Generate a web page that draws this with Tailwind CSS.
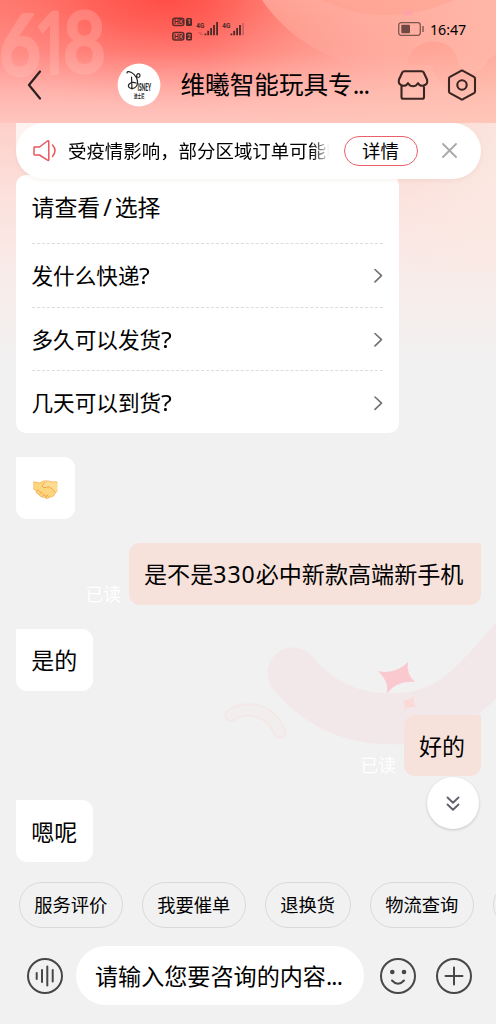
<!DOCTYPE html>
<html lang="zh-CN">
<head>
<meta charset="utf-8">
<title>客服聊天</title>
<script src="https://cdn.jsdelivr.net/npm/@tailwindcss/browser@4"></script>
</head>
<body class="bg-[#f1f1f1]">
<div class="relative isolate flex h-[1024px] w-[496px] flex-col overflow-hidden whitespace-nowrap bg-[#f1f1f1] font-['Noto_Sans','Noto_Sans_CJK_SC',sans-serif] text-black">

  <!-- Festive backdrop -->
  <svg class="absolute inset-0 -z-10" width="496" height="1024" viewBox="0 0 496 1024">
    <defs>
      <radialGradient id="glow" gradientUnits="userSpaceOnUse" cx="165" cy="-5" r="240" gradientTransform="translate(165 0) scale(1 .46) translate(-165 0)">
        <stop offset="0" stop-color="#ff4d45"/><stop offset=".3" stop-color="#ff5850" stop-opacity=".75"/><stop offset="1" stop-color="#ff8f84" stop-opacity="0"/>
      </radialGradient>
      <linearGradient id="head" x1="0" y1="0" x2="0" y2="1"><stop offset="0" stop-color="#ff7a70"/><stop offset=".45" stop-color="#ff908a"/><stop offset=".75" stop-color="#ffaca6"/><stop offset="1" stop-color="#ffbfb8"/></linearGradient>
      <linearGradient id="right" x1="0" y1="0" x2="1" y2="0"><stop offset=".42" stop-color="#ffc0ac" stop-opacity="0"/><stop offset="1" stop-color="#ffc0ac" stop-opacity=".75"/></linearGradient>
      <linearGradient id="body" x1="0" y1="0" x2="0" y2="1"><stop offset="0" stop-color="#fdd0ca"/><stop offset=".3" stop-color="#fce1dc"/><stop offset=".62" stop-color="#f8ecea"/><stop offset="1" stop-color="#f1f1f1"/></linearGradient>
      <linearGradient id="fade" x1="0" y1="0" x2="0" y2="1"><stop offset="0" stop-color="#ffbcae" stop-opacity=".6"/><stop offset="1" stop-color="#ffc4b6" stop-opacity="0"/></linearGradient>
      <linearGradient id="swirl" x1="0" y1="0" x2="0" y2="1"><stop offset="0" stop-color="#ff8f80" stop-opacity=".35"/><stop offset="1" stop-color="#ffa498" stop-opacity=".05"/></linearGradient>
      <linearGradient id="wash" x1="0" y1="0" x2="0" y2="1"><stop offset="0" stop-color="#ffd0c8" stop-opacity="0"/><stop offset="1" stop-color="#ffd0c8" stop-opacity=".35"/></linearGradient>
      <linearGradient id="side" x1="0" y1="0" x2="1" y2="0"><stop offset=".75" stop-color="#fbeae4" stop-opacity="0"/><stop offset="1" stop-color="#fbeae4" stop-opacity=".75"/></linearGradient>
    </defs>
    <rect y="123" width="496" height="247" fill="url(#body)"/>
    <rect y="123" width="496" height="150" fill="url(#side)"/>
    <rect width="496" height="123" fill="url(#head)"/>
    <rect width="496" height="123" fill="url(#glow)"/>
    <rect width="496" height="123" fill="url(#right)"/>
    <path d="M262 0C288 38 330 65 390 72H496V0Z" fill="url(#fade)"/>
    <path d="M322 0C360 20 410 20 455 0Z" fill="#ff9c88" opacity=".35"/>
    <path d="M407 65C410 35 454 32 459 65C464 78 480 76 488 60L496 54V101C460 112 442 92 431 65Z" fill="url(#swirl)"/>
    <rect y="50" width="496" height="73" fill="url(#wash)"/>
    <path d="M403 10l5 1 5-2-2 4 2 3-5-1-5 2 2-4Z" fill="#ff9fae" opacity=".8"/>
    <g fill="#ffc9c2" stroke="#ffc9c2" stroke-width="2" stroke-linejoin="round" opacity=".27" font-family="Lato, sans-serif" font-weight="700" font-size="87">
      <text x="-1" y="76" textLength="42" lengthAdjust="spacingAndGlyphs">6</text>
      <text x="34" y="74" font-family="Open Sans, sans-serif" font-size="86" font-weight="600" textLength="36" lengthAdjust="spacingAndGlyphs">1</text>
      <text x="63" y="73" textLength="43" lengthAdjust="spacingAndGlyphs">8</text>
    </g>
    <path d="M293 673C330 718 375 721 408 718C455 712 478 682 520 634" fill="none" stroke="#f3e8e9" stroke-width="51" stroke-linecap="round"/>
    <path d="M231 715C250 703 272 713 280 732" fill="none" stroke="#f4e6e5" stroke-width="13" stroke-linecap="round"/>
    <path d="M231 715C250 703 272 713 280 732" fill="none" stroke="#f2eeed" stroke-width="10.5" stroke-linecap="round"/>
    <path d="M378 671Q395 675 408 662Q406 674 415 682Q398 680 387 693Q389 681 378 671Z" fill="#fac9d0"/>
    <path d="M403 701Q409 700 414 697Q413 703 416 707Q409 706 404 710Q406 705 403 701Z" fill="#fad9d6"/>
  </svg>

  <header class="h-[123px] shrink-0">
    <!-- Status bar -->
    <div class="flex h-[50px] items-start justify-between pl-[172px] pr-[30px] pt-[17px]">
      <svg width="74" height="26" viewBox="0 0 74 26" fill="#4e2826">
        <g fill="none" stroke="#5c2a27" stroke-width="1.5"><rect x=".8" y="1.2" width="11" height="7.4" rx="2"/><rect x=".8" y="15.6" width="11" height="7.4" rx="2"/></g>
        <g font-family="Roboto, sans-serif" font-weight="700"><g font-size="6.8"><text x="1.9" y="7.4">HD</text><text x="1.9" y="21.8">HD</text></g>
        <rect x="14" y="1" width="6" height="8" rx="1.5"/><rect x="14" y="15.4" width="6" height="8" rx="1.5"/>
        <g font-size="6.5" fill="#e8665f"><text x="15.2" y="7.3">1</text><text x="15.2" y="21.7">2</text></g>
        <g font-size="7.6"><text x="24.3" y="10.6" textLength="8" lengthAdjust="spacingAndGlyphs">4G</text><text x="50.3" y="10.6" textLength="8" lengthAdjust="spacingAndGlyphs">4G</text></g></g>
        <path d="M32.5 16.5h1.8v1.8h-1.8zM35.3 13.8h1.8v4.5h-1.8zM38.2 11h1.8v7.3h-1.8zM41.1 8h1.8v10.3h-1.8zM44.2 5h1.8v13.3h-1.8zM58.5 16.5h1.8v1.8h-1.8zM61.3 13.8h1.8v4.5h-1.8zM64.2 11h1.8v7.3h-1.8zM67.1 8h1.8v10.3h-1.8z"/>
        <path d="M70.3 6h1.6v12.3h-1.6z" opacity=".3"/><path d="M26 15.8h4M28 17.5h3" stroke="#d4534c" stroke-width="1"/>
      </svg>
      <div class="flex items-start gap-[6px]">
        <svg class="mt-[5px]" width="26" height="15" viewBox="0 0 26 15"><rect x=".7" y=".7" width="21.6" height="12.6" rx="2.5" fill="none" stroke="#805650" stroke-width="1.3"/><rect x="3.3" y="2.8" width="8.7" height="8.4" rx="1" fill="#704844"/><path d="M25 4v6" stroke="#805650" stroke-width="1.4"/></svg>
        <span class="w-[36px] pt-[2px] text-[14.3px] leading-[22px] tracking-[-0.1px]">16:47</span>
      </div>
    </div>
    <!-- Conversation title -->
    <div class="flex h-[69px] items-center">
      <svg class="ml-[26px] shrink-0" width="16" height="30" viewBox="0 0 16 30" fill="none" stroke="#2b2220" stroke-width="2.2" stroke-linecap="round" stroke-linejoin="round"><path d="M14 1.5L3 15L14 28.5"/></svg>
      <svg class="ml-[75px] shrink-0" width="44" height="44" viewBox="0 0 44 44">
        <circle cx="22" cy="22" r="21.4" fill="#fff"/>
        <path d="M10 10C10 7 17 9 20 16C22 22 18 27 13 25C9 23 13 18 19 20M14.5 14L15 26M20.5 11C23 9.5 24 14 21.5 14.5C19.5 14.5 19 12 20.5 11" fill="none" stroke="#222" stroke-width="1.2" stroke-linecap="round"/>
        <text x="20.5" y="27.5" font-family="Lato, sans-serif" font-weight="900" font-size="10.5" textLength="13.5" lengthAdjust="spacingAndGlyphs" fill="#222">ISNEY</text>
        <text x="17" y="35" font-family="Noto Sans CJK SC" font-weight="700" font-size="5.4" textLength="10.5" lengthAdjust="spacingAndGlyphs" fill="#222">迪士尼</text>
      </svg>
      <h1 class="ml-[19.5px] w-[190.5px] pt-px text-[24.6px] leading-[36px] font-normal">维曦智能玩具专<span class="tracking-[-1.2px]">...</span></h1>
      <svg class="ml-[26px] shrink-0" width="32" height="32" viewBox="0 0 32 32" fill="none" stroke="#3a2522" stroke-width="2.1" stroke-linejoin="round" stroke-linecap="round"><path d="M7.2 2.2H24.8Q26 2.2 26.6 3.2L30 10.5Q31.4 15.7 26 16.7Q22.5 17 21 14.2Q19 17.3 16 17.3Q13 17.3 11 14.2Q9.5 17 6 16.7Q.6 15.7 2 10.5L5.4 3.2Q6 2.2 7.2 2.2ZM4.5 16.4V28Q4.5 29.8 6.3 29.8H25.2Q27 29.8 27 28V16.4"/></svg>
      <svg class="ml-[17px] shrink-0" width="32" height="32" viewBox="0 0 32 32" fill="none" stroke="#3a2522" stroke-width="2.1" stroke-linejoin="round"><path d="M15 1.8Q16 1.3 17 1.8L28 7.9Q29 8.5 29 9.6V22.4Q29 23.5 28 24.1L17 30.2Q16 30.7 15 30.2L4 24.1Q3 23.5 3 22.4V9.6Q3 8.5 4 7.9Z"/><circle cx="16" cy="16" r="4.7"/></svg>
    </div>
  </header>

  <main class="flex min-h-0 flex-1 flex-col px-[15.5px]">
    <!-- Notice; the tail of the previous bubble shows behind its left corner -->
    <div class="z-10 h-[55.5px] w-full shrink-0 bg-[linear-gradient(#fff3f1,#fff3f1)] bg-[length:28px_28px] bg-no-repeat">
      <div class="flex h-full items-center rounded-full bg-white shadow-[0_2px_4px_rgba(120,60,40,0.06)]">
        <svg class="ml-[17.5px] shrink-0" width="24" height="24" viewBox="0 0 24 24" fill="none" stroke="#e8555d" stroke-width="1.5" stroke-linejoin="round" stroke-linecap="round"><path d="M1.5 8H6.5L14.5 2Q15.8 1.3 15.8 2.8V20.4Q15.8 22 14.5 21.2L6.5 16H1.5Q1 16 1 15.3V8.7Q1 8 1.5 8ZM19.5 6Q24.5 11.5 19.5 17.5"/></svg>
        <div class="ml-[11px] w-[262px] overflow-hidden pt-px text-[18.45px] leading-[28px] [mask-image:linear-gradient(to_right,black_93%,transparent)]">受疫情影响，部分区域订单可能<span class="opacity-50">唯</span></div>
        <button class="ml-[13.5px] flex h-[29.5px] w-[74px] shrink-0 items-center justify-center rounded-full border-[1.5px] border-[#e9606b] text-[18.4px] leading-none">详情</button>
        <svg class="ml-[23px] shrink-0" width="17" height="17" viewBox="0 0 17 17" stroke="#aaa" stroke-width="1.9" stroke-linecap="round"><path d="M2 2L15 15M15 2L2 15"/></svg>
      </div>
    </div>

    <!-- Question menu -->
    <section class="-mt-[3.5px] h-[258px] w-[383px] shrink-0 rounded-[10px] bg-white px-[16px]">
      <h2 class="flex h-[68px] items-center pb-[2px] text-[22.9px] font-normal">请查看<span class="px-[3px]">/</span>选择</h2>
      <div class="flex h-[63.6px] items-center justify-between border-t border-dashed border-[#dcdcdc] pt-[2px] text-[21.6px]"><span>发什么快递<span class="inline-block origin-left scale-x-115">?</span></span><svg width="10" height="16" viewBox="0 0 10 16" fill="none" stroke="#707070" stroke-width="1.6" stroke-linecap="round" stroke-linejoin="round"><path d="M2 1.5L8.5 7.7L2 13.9"/></svg></div>
      <div class="flex h-[63.6px] items-center justify-between border-t border-dashed border-[#dcdcdc] pt-[2px] text-[21.6px]"><span>多久可以发货<span class="inline-block origin-left scale-x-115">?</span></span><svg width="10" height="16" viewBox="0 0 10 16" fill="none" stroke="#707070" stroke-width="1.6" stroke-linecap="round" stroke-linejoin="round"><path d="M2 1.5L8.5 7.7L2 13.9"/></svg></div>
      <div class="flex h-[62.8px] items-center justify-between border-t border-dashed border-[#dcdcdc] pt-[3px] text-[21.6px]"><span>几天可以到货<span class="inline-block origin-left scale-x-115">?</span></span><svg width="10" height="16" viewBox="0 0 10 16" fill="none" stroke="#707070" stroke-width="1.6" stroke-linecap="round" stroke-linejoin="round"><path d="M2 1L8.5 7.2L2 13.4"/></svg></div>
    </section>

    <!-- Messages -->
    <div class="mt-[24px] flex h-[62px] w-[59px] shrink-0 items-center justify-center rounded-[11px] rounded-tl-none bg-white">
      <svg class="mt-[2px]" width="25" height="21" viewBox="0 0 26 22" stroke-linejoin="round" stroke-linecap="round"><path d="M1 3L7 4Q11 1 16 2L20 3L25 3V13L23 15Q22 19 18 19Q14 22 11 19Q7 19 6 16Q3 16 3 12L1 11Z" fill="#fdd57d" stroke="#f0b055" stroke-width=".7"/><path d="M10 7Q12 3 16 3L20 4L25 4V12L22 14Q19 9 16 8Q12 11 10 7Z" fill="#fddc92"/><path d="M12 4Q8 8 11 9Q14 9 16 8Q20 9 23 14M4 13Q5 10 7 13M7 16Q8 12 10 15M10 18Q11 14 13 18M14 19Q14 15 16 18" fill="none" stroke="#e99b4d" stroke-width=".9"/></svg>
    </div>
    <div class="mt-[24px] flex h-[61.5px] shrink-0 items-end justify-end gap-[7.5px]">
      <span class="text-[17.8px] leading-[22px] text-white">已读</span>
      <p class="flex h-full w-[352px] items-center rounded-[11px] rounded-tr-none bg-[#f7e2db] pt-px pl-[15.5px] text-[23.1px]">是不是<span class="tracking-[0.9px]">330</span>必中新款高端新手机</p>
    </div>
    <p class="mt-[24px] flex h-[62px] w-[77.5px] shrink-0 items-center justify-center rounded-[11px] rounded-tl-none bg-white pt-px text-[23px]">是的</p>
    <div class="mt-[24px] flex h-[61.5px] shrink-0 items-end justify-end gap-[7.5px]">
      <span class="text-[17.8px] leading-[22px] text-white">已读</span>
      <p class="flex h-full w-[77px] items-center justify-center rounded-[11px] rounded-tr-none bg-[#f7e2db] pt-px text-[23px]">好的</p>
    </div>
    <p class="mt-[24px] flex h-[62px] w-[77.5px] shrink-0 items-center justify-center rounded-[11px] rounded-tl-none bg-white pt-[2px] text-[23px]">嗯呢</p>
  </main>

  <button class="absolute left-[426.5px] top-[776.5px] flex size-[52.5px] items-center justify-center rounded-full bg-white shadow-[0_1px_3px_rgba(0,0,0,0.18)]">
    <svg class="mt-[2px]" width="16" height="18" viewBox="0 0 16 18" fill="none" stroke="#62626f" stroke-width="1.9" stroke-linecap="round" stroke-linejoin="round"><path d="M2.5 2.5L8 7.7L13.5 2.5M2.5 9.5L8 14.7L13.5 9.5"/></svg>
  </button>

  <footer class="h-[142px] shrink-0 overflow-hidden">
    <div class="flex gap-[19px] pl-[18.7px] text-[18.3px] leading-[43px]">
      <button class="h-[46px] w-[104px] shrink-0 rounded-full border border-[#d9d9d9] pb-px">服务评价</button>
      <button class="h-[46px] w-[104px] shrink-0 rounded-full border border-[#d9d9d9] pb-px">我要催单</button>
      <button class="h-[46px] w-[86px] shrink-0 rounded-full border border-[#d9d9d9] pb-px">退换货</button>
      <button class="h-[46px] w-[104px] shrink-0 rounded-full border border-[#d9d9d9] pb-px">物流查询</button>
      <button class="h-[46px] w-[104px] shrink-0 rounded-full border border-[#d9d9d9]"></button>
    </div>
    <div class="mt-[18px] flex items-center">
      <svg class="ml-[26px] shrink-0" width="38" height="38" viewBox="0 0 38 38" fill="none" stroke="#474747" stroke-width="2" stroke-linecap="round"><circle cx="19" cy="19" r="17"/><path d="M10.7 16v6M16 13v12M21.3 9.5v19M26.7 13v11.5"/></svg>
      <div class="ml-[12px] h-[59px] w-[288px] rounded-full bg-white pl-[19px] text-[23.1px] leading-[61px]">请输入您要咨询的内容<span class="tracking-[-0.8px]">...</span></div>
      <svg class="ml-[15px] shrink-0" width="38" height="38" viewBox="0 0 38 38" fill="none" stroke="#474747" stroke-width="2" stroke-linecap="round"><circle cx="19" cy="19" r="17"/><path d="M13 23.5Q19 30 25 23.5"/><circle cx="13.3" cy="15" r="2.3" fill="#474747" stroke="none"/><circle cx="25" cy="15" r="2.3" fill="#474747" stroke="none"/></svg>
      <svg class="ml-[18px] shrink-0" width="38" height="38" viewBox="0 0 38 38" fill="none" stroke="#474747" stroke-width="2" stroke-linecap="round"><circle cx="19" cy="19" r="17"/><path d="M10.5 19h17M19 10.5v17"/></svg>
    </div>
  </footer>
</div>
</body>
</html>
